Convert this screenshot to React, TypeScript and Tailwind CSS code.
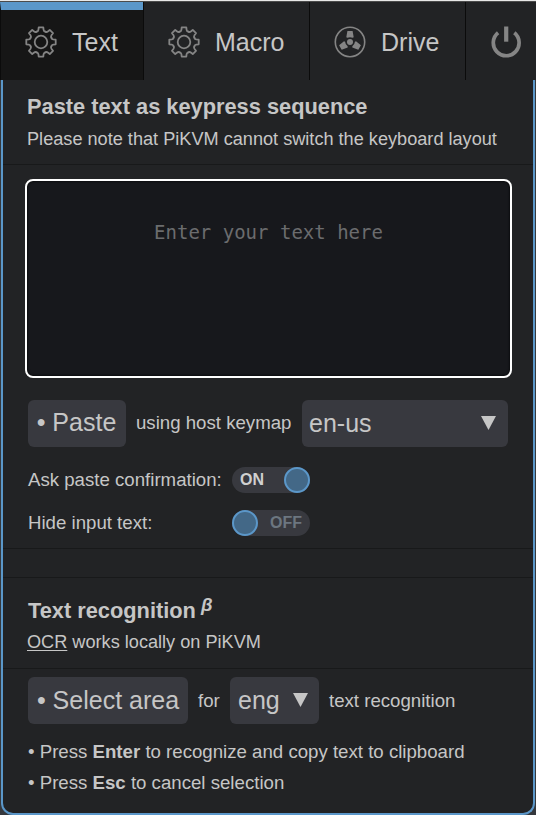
import React from 'react';
import clsx from 'clsx';

const toothAngles = [0, 45, 90, 135, 180, 225, 270, 315];
const bladeAngles = [0, 120, 240];

const GearIcon: React.FC = () => (
  <svg className="w-8 h-8 shrink-0" viewBox="-16 -16 32 32" fill="none" stroke="#858585" strokeWidth="1.8" strokeLinecap="round" strokeLinejoin="round">
    {toothAngles.map((angle) => (
      <path
        key={angle}
        transform={`rotate(${angle})`}
        d="M-4.3-10.4Q-2.8-10.8-2.6-12.2L-2.3-14.7H2.3L2.6-12.2Q2.8-10.8 4.3-10.4"
      />
    ))}
    <circle r="6.3" />
  </svg>
);

const DriveIcon: React.FC = () => (
  <svg className="w-8 h-8 shrink-0" viewBox="-16 -16 32 32">
    <circle r="14.7" fill="none" stroke="#858585" strokeWidth="1.6" />
    <circle r="3" fill="#858585" />
    {bladeAngles.map((angle) => (
      <path key={angle} transform={`rotate(${angle})`} fill="#858585" d="M-2.6-11.1H2.6L3.7-4.8L2.6-4.2Q0-5.4-2.6-4.2L-3.7-4.8Z" />
    ))}
  </svg>
);

const PowerIcon: React.FC = () => (
  <svg className="w-8 h-8 shrink-0" viewBox="-16 -16 32 32" fill="none" stroke="#858585" strokeWidth="3.7">
    <path d="M-7.9-9.2A12.9 12.9 0 1 0 8.3-9.2" />
    <path d="M.2-15.5V-.3" strokeWidth="4.2" />
  </svg>
);

const tabs = [
  { name: 'Text', icon: GearIcon, active: true, width: 'w-[143px]' },
  { name: 'Macro', icon: GearIcon, active: false, width: 'w-[166px]' },
  { name: 'Drive', icon: DriveIcon, active: false, width: 'w-[156px]' },
  { name: '', icon: PowerIcon, active: false, width: 'w-[71px]' },
];

const Select: React.FC<{ value: string; className: string }> = ({ value, className }) => (
  <button className={clsx('flex items-center justify-between h-[47px] rounded-md bg-[#38393f] text-[25px]', className)}>
    {value}
    <svg className="w-[15px] h-[14px] mb-0.5" viewBox="0 0 15 14" fill="#c6c6c6">
      <path d="M0 0H15L7.5 14Z" />
    </svg>
  </button>
);

const Switch: React.FC<{ on: boolean }> = ({ on }) => (
  <button
    className={clsx(
      'flex items-center justify-between w-[78px] h-[26px] rounded-full bg-[#38393f] text-[16px] font-bold',
      on ? 'pl-2 text-[#d0d0d0]' : 'flex-row-reverse pr-2 text-[#6c7680]'
    )}
  >
    {on ? 'ON' : 'OFF'}
    <span className="w-[26px] h-[26px] rounded-full border-2 border-[#5b97c9] bg-[#436887]" />
  </button>
);

export default function App() {
  return (
    <div className="w-[536px] h-[815px] overflow-hidden flex flex-col bg-[#35383d] text-[#c6c6c6] text-[18.65px] leading-none font-['Liberation_Sans',Arial,sans-serif]">
      <div className="h-[2px] shrink-0 bg-[#e8e8e8] border-b border-[#4c4c4c]" />
      <nav className="flex h-[78px] shrink-0 bg-[#222325]">
        {tabs.map((tab, i) => (
          <div
            key={i}
            className={clsx(
              'flex items-center shrink-0 pl-6 pt-0.5 gap-[15px] text-[25px] border-l border-[#0b0b0b]',
              tab.width,
              tab.active && 'bg-[#161616] border-t-8 border-t-[#5b97c9] pb-2'
            )}
          >
            <tab.icon />
            <span className="pt-px">{tab.name}</span>
          </div>
        ))}
      </nav>

      <main className="flex flex-col h-[735px] ml-px mr-px rounded-b-[12px] border-2 border-t-0 border-[#5b97c9] bg-[#222325]">
        <header className="h-[85px] shrink-0 border-b border-[#18191a] pl-6 pt-4">
          <h2 className="text-[21.8px] leading-[22px] font-bold">Paste text as keypress sequence</h2>
          <p className="mt-[11px] text-[18.15px] leading-5 whitespace-nowrap">Please note that PiKVM cannot switch the keyboard layout</p>
        </header>

        <section className="h-[384px] shrink-0 border-b border-[#18191a] pl-[22px] pt-[14px]">
          <textarea
            className="block w-[487px] h-[199px] resize-none rounded-lg border-2 border-white bg-[#17181c] pt-[39px] text-center text-[19px] leading-6 placeholder:text-[#6b6c6e] font-['DejaVu_Sans_Mono',monospace] shadow-[inset_0_0_3px_#000]"
            placeholder="Enter your text here"
          />
          <div className="flex items-center mt-[22px] pl-[3px]">
            <button className="w-[98px] h-[47px] pr-px pb-0.5 rounded-md bg-[#38393f] text-[25px]">• Paste</button>
            <span className="ml-[10px] w-[166px] whitespace-nowrap">using host keymap</span>
            <Select value="en-us" className="w-[206px] pl-[7px] pr-3" />
          </div>
          <div className="flex flex-col gap-[17px] mt-5 pl-[3px]">
            <div className="flex items-center">
              <span className="w-[204px] pt-px">Ask paste confirmation:</span>
              <Switch on />
            </div>
            <div className="flex items-center">
              <span className="w-[204px] pt-px">Hide input text:</span>
              <Switch on={false} />
            </div>
          </div>
        </section>

        <div className="h-[29px] shrink-0 border-b border-[#18191a]" />

        <header className="h-[91px] shrink-0 border-b border-[#18191a] pl-6 pt-[22px]">
          <h2 className="flex text-[21.8px] leading-[22px] font-bold">
            <span className="pl-px">Text recognition</span>
            <sup className="ml-[5px] -top-[6px] text-[18.6px] italic leading-[22px]">β</sup>
          </h2>
          <p className="mt-[10px] text-[18.15px] leading-5">
            <span className="underline underline-offset-2">OCR</span> works locally on PiKVM
          </p>
        </header>

        <section className="pl-[25px] pt-2">
          <div className="flex items-center">
            <button className="w-40 h-[47px] rounded-md bg-[#38393f] text-[25px]">• Select area</button>
            <span className="ml-[10px] w-8 pt-px">for</span>
            <Select value="eng" className="w-[89px] pl-2 pr-[11px]" />
            <span className="ml-[10px] pt-px">text recognition</span>
          </div>
          <p className="mt-[18px] leading-5">
            • Press <b>Enter</b> to recognize and copy text to clipboard
          </p>
          <p className="mt-[11px] leading-5">
            • Press <b>Esc</b> to cancel selection
          </p>
        </section>
      </main>
    </div>
  );
}
